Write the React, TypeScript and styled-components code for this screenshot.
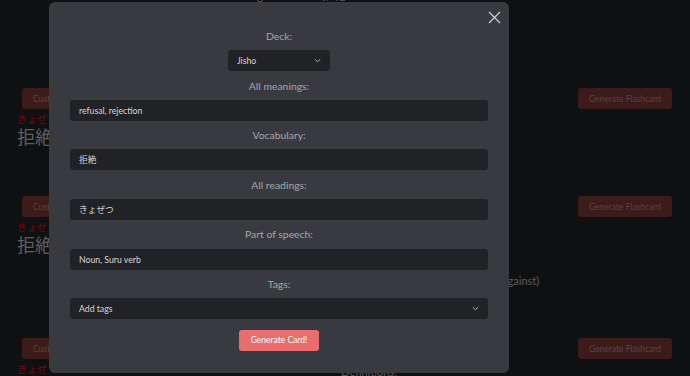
import styled, { createGlobalStyle } from 'styled-components';

const GlobalStyle = createGlobalStyle`
  html, body {
    margin: 0;
    padding: 0;
    background: #1e2024;
    font-family: Lato, "Noto Sans CJK JP", sans-serif;
    overflow: hidden;
  }
`;

const Page = styled.div`
  width: 690px;
  height: 376px;
  overflow: hidden;
`;

const Heading = styled.div`
  margin-top: -11px;
  padding-left: 218px;
  font-size: 12px;
  line-height: 14px;
  color: #b8babd;
`;

const List = styled.div`
  padding: 85px 18px 0 17px;
  display: flex;
  flex-direction: column;
`;

const Card = styled.div<{ $space: number }>`
  display: flex;
  flex-direction: column;
  margin-bottom: ${(p) => p.$space}px;
`;

const CardHeader = styled.div`
  display: flex;
  justify-content: space-between;
  padding-left: 5px;
`;

const GhostButton = styled.button`
  height: 21px;
  padding: 0 11px;
  border: none;
  border-radius: 3px;
  background: #783636;
  color: #b48383;
  font-family: Lato, sans-serif;
  font-size: 8.5px;
`;

const CardBody = styled.div`
  display: flex;
`;

const WordColumn = styled.div`
  width: 49px;
  display: flex;
  flex-direction: column;
`;

const Reading = styled.div`
  margin-top: 4px;
  font-size: 10px;
  line-height: 12px;
  color: #d41616;
  white-space: nowrap;
`;

const Word = styled.div`
  margin-top: 1px;
  font-size: 18px;
  line-height: 22px;
  color: #bcbdbe;
  white-space: nowrap;
`;

const Definitions = styled.div`
  flex: 1;
  display: flex;
  flex-direction: column;
  align-items: center;
  padding-top: 6px;
  gap: 4px;
  color: #b5b7ba;
  font-size: 11px;
  line-height: 13px;
  white-space: nowrap;
`;

const DefTitle = styled.div`
  font-size: 11px;
`;

const Overlay = styled.div`
  position: fixed;
  inset: 0;
  background: rgba(0, 0, 0, 0.5);
`;

const Modal = styled.div`
  position: fixed;
  left: 49px;
  top: 2px;
  width: 460px;
  height: 371px;
  box-sizing: border-box;
  padding: 27px 21px 0;
  border-radius: 6px;
  background: #393a3f;
  display: flex;
  flex-direction: column;
  align-items: center;
  gap: 7.3px;
`;

const CloseButton = styled.button`
  position: absolute;
  top: 8px;
  right: 7px;
  width: 15px;
  height: 15px;
  padding: 0;
  border: none;
  background: none;
  display: flex;
  align-items: center;
  justify-content: center;
  svg {
    width: 13px;
    height: 13px;
  }
`;

const Label = styled.div`
  font-size: 10.4px;
  line-height: 14px;
  color: #a2a7ae;
`;

const Field = styled.div<{ $width?: number }>`
  width: ${(p) => (p.$width ? `${p.$width}px` : '100%')};
  height: 21px;
  flex-shrink: 0;
  box-sizing: border-box;
  padding: 0 9px;
  border-radius: 3px;
  background: #212226;
  display: flex;
  align-items: center;
  justify-content: space-between;
  color: #d6d7d9;
  font-size: 8.7px;
  font-family: Lato, "Noto Sans CJK JP", sans-serif;
`;

const Chevron = () => (
  <svg width="7" height="5" viewBox="0 0 7 5">
    <path d="M0.8 1.2 L3.5 3.8 L6.2 1.2" fill="none" stroke="#b4b6ba" strokeWidth="1" />
  </svg>
);

const SubmitButton = styled.button`
  margin-top: 3px;
  height: 21px;
  flex-shrink: 0;
  padding: 0 12px;
  border: none;
  border-radius: 3px;
  background: #e96c6f;
  color: #ffffff;
  font-family: Lato, sans-serif;
  font-size: 8.5px;
`;

const cards = [
  { space: 48, defs: ['to refuse'] },
  {
    space: 51,
    defs: ['refusal', 'rejection', 'to refuse; to reject; to deny (used to express a very firm refusal against)'],
  },
  { space: 0, defs: ['refusal'] },
];

const fields = [
  { label: 'All meanings:', value: 'refusal, rejection' },
  { label: 'Vocabulary:', value: '拒絶' },
  { label: 'All readings:', value: 'きょぜつ' },
  { label: 'Part of speech:', value: 'Noun, Suru verb' },
];

export default function App() {
  return (
    <Page>
      <GlobalStyle />
      <Heading>Showing results for 拒絶</Heading>
      <List>
        {cards.map((c, i) => (
          <Card key={i} $space={c.space}>
            <CardHeader>
              <GhostButton>Custom Flashcard</GhostButton>
              <GhostButton>Generate Flashcard</GhostButton>
            </CardHeader>
            <CardBody>
              <WordColumn>
                <Reading>きょぜつ</Reading>
                <Word>拒絶</Word>
              </WordColumn>
              <Definitions>
                <DefTitle>Definitions:</DefTitle>
                {c.defs.map((d) => (
                  <div key={d}>{d}</div>
                ))}
              </Definitions>
            </CardBody>
          </Card>
        ))}
      </List>
      <Overlay />
      <Modal>
        <CloseButton>
          <svg viewBox="0 0 13 13">
            <path d="M1 1 L12 12 M12 1 L1 12" stroke="#c9cbce" strokeWidth="1.3" />
          </svg>
        </CloseButton>
        <Label>Deck:</Label>
        <Field $width={102}>
          <span>Jisho</span>
          <Chevron />
        </Field>
        {fields.map((f) => [
          <Label key={f.label}>{f.label}</Label>,
          <Field key={f.value}>{f.value}</Field>,
        ])}
        <Label>Tags:</Label>
        <Field>
          <span>Add tags</span>
          <Chevron />
        </Field>
        <SubmitButton>Generate Card!</SubmitButton>
      </Modal>
    </Page>
  );
}
